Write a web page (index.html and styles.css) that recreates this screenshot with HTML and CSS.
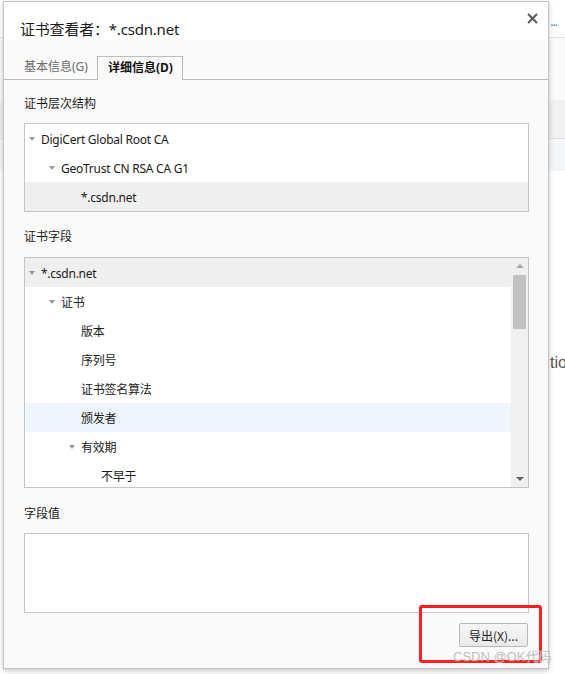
FILE: index.html
```html
<!DOCTYPE html>
<html lang="zh">
<head>
<meta charset="utf-8">
<title>证书查看者</title>
<link rel="stylesheet" href="styles.css">
</head>
<body>
<div class="page">
  <div class="page-top"><span class="dots">...</span></div>
  <div class="page-band"></div>
  <div class="page-band2"></div>
  <div class="page-band3"></div>
  <div class="page-text">tio</div>
</div>

<div class="dialog">
  <div class="dlg-header">
    <div class="dlg-title">证书查看者：*.csdn.net</div>
    <svg class="close" width="11" height="11" viewBox="0 0 11 11"><path d="M1 1L10 10M10 1L1 10" stroke="#5a5a5a" stroke-width="2" fill="none"/></svg>
  </div>
  <div class="tabs">
    <div class="tab">基本信息(G)</div>
    <div class="tab active">详细信息(D)</div>
  </div>
  <div class="dlg-body">
    <div class="label">证书层次结构</div>
    <div class="tree">
      <div class="row lvl0"><span class="tog open"></span><span>DigiCert Global Root CA</span></div>
      <div class="row lvl1"><span class="tog open"></span><span>GeoTrust CN RSA CA G1</span></div>
      <div class="row lvl2 sel"><span class="tog"></span><span>*.csdn.net</span></div>
    </div>

    <div class="label l2">证书字段</div>
    <div class="fields">
      <div class="field-list">
        <div class="row lvl0 sel"><span class="tog open"></span><span>*.csdn.net</span></div>
        <div class="row lvl1"><span class="tog open"></span><span>证书</span></div>
        <div class="row lvl2"><span class="tog"></span><span>版本</span></div>
        <div class="row lvl2"><span class="tog"></span><span>序列号</span></div>
        <div class="row lvl2"><span class="tog"></span><span>证书签名算法</span></div>
        <div class="row lvl2 hover"><span class="tog"></span><span>颁发者</span></div>
        <div class="row lvl2"><span class="tog open"></span><span>有效期</span></div>
        <div class="row lvl3"><span class="tog"></span><span>不早于</span></div>
      </div>
      <div class="scrollbar">
        <div class="arrow up"></div>
        <div class="track"><div class="thumb"></div></div>
        <div class="arrow down"></div>
      </div>
    </div>

    <div class="label l3">字段值</div>
    <div class="value-box"></div>
    <div class="actions">
      <button class="btn">导出(X)...</button>
    </div>
  </div>
</div>

<div class="redbox"></div>
<div class="watermark">CSDN @OK代码</div>
</body>
</html>
```

FILE: styles.css
```css
html, body {
  margin: 0;
  padding: 0;
}
body {
  width: 565px;
  height: 674px;
  overflow: hidden;
  background: #ffffff;
  font-family: "Noto Sans", "Noto Sans CJK SC", sans-serif;
  color: #1a1a1a;
  position: relative;
}

/* page behind the dialog */
.page {
  height: 674px;
  display: flex;
  flex-direction: column;
}
.page-top {
  height: 37px;
  border-bottom: 1px solid #e3e3e3;
  display: flex;
  justify-content: flex-end;
  align-items: center;
}
.dots {
  font-size: 12px;
  color: #4a7fd0;
  margin-right: 8px;
  margin-top: 6px;
  letter-spacing: -1px;
}
.page-band {
  height: 62px;
  background: #fafafa;
}
.page-band2 {
  height: 38px;
  background: #f1f1f1;
  border-bottom: 1px solid #e0e0e0;
}
.page-band3 {
  height: 32px;
  background: #f5f6f9;
}
.page-text {
  margin-top: 183px;
  padding-left: 550px;
  font-size: 16px;
  color: #555;
  font-family: "Liberation Sans", sans-serif;
}

/* dialog */
.dialog {
  position: absolute;
  left: 3px;
  top: 1px;
  width: 544px;
  height: 666px;
  border: 1px solid #c4c4c4;
  background: #fafafa;
  box-shadow: 0 2px 5px rgba(0, 0, 0, 0.22);
  display: flex;
  flex-direction: column;
}
.dlg-header {
  background: #ffffff;
  height: 38px;
  position: relative;
  padding-left: 16px;
  box-sizing: border-box;
  padding-top: 17px;
}
.dlg-title {
  font-size: 15px;
  line-height: 20px;
  color: #1a1a1a;
  letter-spacing: -0.2px;
}
.close {
  position: absolute;
  right: 10px;
  top: 11px;
}
.tabs {
  display: flex;
  align-items: flex-end;
  padding-left: 10px;
  height: 40px;
  box-sizing: border-box;
  border-bottom: 1px solid #bdbdbd;
}
.tab {
  height: 23px;
  line-height: 22px;
  padding: 0 10px;
  font-size: 12px;
  color: #6a6a6a;
  box-sizing: border-box;
}
.tab.active {
  color: #111;
  font-weight: bold;
  background: #fafafa;
  border: 1px solid #bdbdbd;
  border-bottom: none;
  margin-bottom: -1px;
  height: 24px;
  padding: 0 9px 0 10px;
  margin-left: -1px;
}

.dlg-body {
  padding: 0 19px 0 20px;
  display: flex;
  flex-direction: column;
}
.label {
  font-size: 12px;
  line-height: 16px;
  margin-top: 16px;
  margin-bottom: 11px;
  color: #1a1a1a;
}
.label.l2 {
  margin-top: 17px;
  margin-bottom: 12px;
}
.label.l3 {
  margin-top: 18px;
  margin-bottom: 11px;
}

.tree {
  border: 1px solid #c4c4c4;
  background: #ffffff;
  height: 87px;
}
.row {
  height: 29px;
  display: flex;
  align-items: center;
  font-size: 12px;
  color: #1a1a1a;
  white-space: nowrap;
  letter-spacing: -0.25px;
  padding-top: 1px;
  box-sizing: border-box;
}
.row.sel {
  background: #efefef;
}
.row.hover {
  background: #eef5fd;
}
.lvl0 { padding-left: 4px; }
.lvl1 { padding-left: 24px; }
.lvl2 { padding-left: 44px; }
.lvl3 { padding-left: 64px; }
.tog {
  width: 12px;
  flex: none;
  display: flex;
  align-items: center;
}
.tog.open::before {
  content: "";
  display: block;
  width: 0;
  height: 0;
  border-left: 3.5px solid transparent;
  border-right: 3.5px solid transparent;
  border-top: 4px solid #9a9a9a;
  margin-top: 0;
}

.fields {
  border: 1px solid #c4c4c4;
  background: #ffffff;
  height: 229px;
  display: flex;
  overflow: hidden;
}
.field-list {
  flex: 1;
  overflow: hidden;
}
.scrollbar {
  width: 17px;
  background: #f0f0f0;
  display: flex;
  flex-direction: column;
  align-items: center;
}
.arrow {
  width: 0;
  height: 0;
  border-left: 4px solid transparent;
  border-right: 4px solid transparent;
  margin: 6px 0;
}
.arrow.up {
  border-bottom: 4px solid #a3a3a3;
}
.arrow.down {
  border-top: 4px solid #606060;
}
.track {
  flex: 1;
  width: 100%;
  display: flex;
  justify-content: center;
}
.thumb {
  width: 13px;
  height: 54px;
  background: #c1c1c1;
  margin-top: 1px;
}

.value-box {
  height: 78px;
  border: 1px solid #c4c4c4;
  background: #ffffff;
}
.actions {
  display: flex;
  justify-content: flex-end;
  margin-top: 10px;
}
.btn {
  width: 69px;
  height: 24px;
  font-family: "Noto Sans CJK SC", "Noto Sans", sans-serif;
  font-size: 12px;
  color: #222;
  background: linear-gradient(#f6f6f6, #e9e9e9);
  border: 1px solid #b9b9b9;
  border-radius: 2px;
  padding: 0;
  margin-right: 1px;
}

.redbox {
  position: absolute;
  left: 419px;
  top: 605px;
  width: 117px;
  height: 52px;
  border: 3px solid #ff1f1f;
  border-radius: 3px;
}
.watermark {
  position: absolute;
  left: 453px;
  top: 648px;
  font-size: 13px;
  line-height: 18px;
  color: rgba(140, 140, 140, 0.6);
  text-shadow: 0 0 1px #fff;
  font-family: "Liberation Sans", "Noto Sans CJK SC", sans-serif;
}
```
